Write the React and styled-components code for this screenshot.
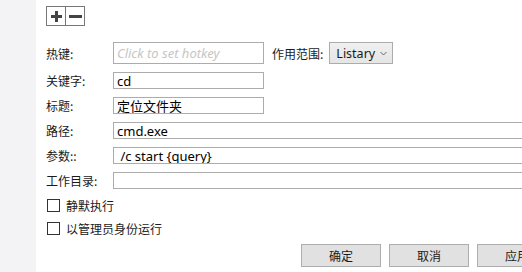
import styled, { createGlobalStyle } from 'styled-components';

const GlobalStyle = createGlobalStyle`
    html, body {
        margin: 0;
        padding: 0;
        width: 522px;
        height: 272px;
        overflow: hidden;
        background: #ffffff;
        font-family: "Noto Sans", "Noto Sans CJK SC", sans-serif;
        font-size: 12px;
        color: #1a1a1a;
    }
`;

const Page = styled.div`
    display: flex;
    width: 522px;
    height: 272px;
    overflow: hidden;
`;

const Sidebar = styled.div`
    width: 36px;
    flex-shrink: 0;
    background-color: #f3f3f5;
`;

const Main = styled.div`
    display: flex;
    flex-direction: column;
    padding: 6px 0 0 10px;
    flex: 1;
    min-width: 0;
`;

const Toolbar = styled.div`
    display: flex;
    width: 39px;
    height: 20px;
    border: 1px solid #777777;
    box-sizing: border-box;
`;

const ToolButton = styled.div`
    flex: 1;
    display: flex;
    align-items: center;
    justify-content: center;
    border-left: ${props => props.$first ? 'none' : '1px solid #777777'};
`;

const Form = styled.div`
    display: grid;
    grid-template-columns: 67px auto;
    grid-template-rows: 22px;
    grid-auto-rows: 17px;
    row-gap: 8px;
    margin-top: 16px;
    align-items: center;
`;

const Label = styled.span`
    font-family: "Noto Sans CJK SC", sans-serif;
    font-size: 12px;
    line-height: 17px;
    white-space: nowrap;
`;

const HotkeyCell = styled.div`
    display: flex;
    align-items: center;
    height: 22px;
`;

const Input = styled.div`
    box-sizing: border-box;
    height: ${props => props.$tall ? '22px' : '17px'};
    width: ${props => props.$wide ? '430px' : '151px'};
    border: 1px solid #acacac;
    background: #ffffff;
    padding: 0 3px;
    display: flex;
    align-items: center;
    font-family: "Noto Sans", "Noto Sans CJK SC", sans-serif;
    font-size: 13px;
    white-space: nowrap;
    overflow: hidden;
    color: ${props => props.$placeholder ? '#c6c6c6' : '#000000'};
    font-style: ${props => props.$placeholder ? 'italic' : 'normal'};
`;

const ScopeLabel = styled(Label)`
    margin-left: 8px;
`;

const Select = styled.div`
    box-sizing: border-box;
    height: 22px;
    width: 64px;
    margin-left: 6px;
    border: 1px solid #acacac;
    background: linear-gradient(#f0f0f0, #e5e5e5);
    display: flex;
    align-items: center;
    justify-content: space-between;
    padding: 0 5px 0 6px;
    font-size: 12.5px;
`;

const Checks = styled.div`
    display: flex;
    flex-direction: column;
    gap: 8px;
    margin-top: 9px;
    padding-left: 1px;
`;

const CheckRow = styled.label`
    display: flex;
    align-items: center;
    gap: 6px;
    height: 15px;
`;

const Box = styled.span`
    box-sizing: border-box;
    width: 13px;
    height: 13px;
    border: 1px solid #333333;
    background: #ffffff;
`;

const ButtonRow = styled.div`
    display: flex;
    gap: 8px;
    margin-top: 8px;
    padding-left: 255px;
`;

const Button = styled.div`
    box-sizing: border-box;
    flex-shrink: 0;
    width: 80px;
    height: 23px;
    border: 1px solid #adadad;
    background: #e1e1e1;
    display: flex;
    align-items: center;
    justify-content: center;
    font-family: "Noto Sans CJK SC", sans-serif;
    font-size: 12px;
`;

const Plus = () => (
    <svg width="11" height="11" viewBox="0 0 11 11">
        <rect x="4" y="0" width="3" height="11" fill="#444" />
        <rect x="0" y="4" width="11" height="3" fill="#444" />
    </svg>
);

const Minus = () => (
    <svg width="13" height="11" viewBox="0 0 13 11">
        <rect x="0" y="4" width="13" height="3" fill="#444" />
    </svg>
);

const Chevron = () => (
    <svg width="7" height="5" viewBox="0 0 7 5">
        <path d="M0.5 1 L3.5 4 L6.5 1" fill="none" stroke="#666" strokeWidth="1" />
    </svg>
);

const App = () => {
    return (
        <>
            <GlobalStyle />
            <Page>
                <Sidebar />
                <Main>
                    <Toolbar>
                        <ToolButton $first><Plus /></ToolButton>
                        <ToolButton><Minus /></ToolButton>
                    </Toolbar>
                    <Form>
                        <Label>热键:</Label>
                        <HotkeyCell>
                            <Input $tall $placeholder>Click to set hotkey</Input>
                            <ScopeLabel>作用范围:</ScopeLabel>
                            <Select>Listary <Chevron /></Select>
                        </HotkeyCell>
                        <Label>关键字:</Label>
                        <Input>cd</Input>
                        <Label>标题:</Label>
                        <Input>定位文件夹</Input>
                        <Label>路径:</Label>
                        <Input $wide>cmd.exe</Input>
                        <Label>参数::</Label>
                        <Input $wide>&nbsp;/c start {'{query}'}</Input>
                        <Label>工作目录:</Label>
                        <Input $wide></Input>
                    </Form>
                    <Checks>
                        <CheckRow><Box /><Label>静默执行</Label></CheckRow>
                        <CheckRow><Box /><Label>以管理员身份运行</Label></CheckRow>
                    </Checks>
                    <ButtonRow>
                        <Button>确定</Button>
                        <Button>取消</Button>
                        <Button>应用</Button>
                    </ButtonRow>
                </Main>
            </Page>
        </>
    );
};

export default App;
